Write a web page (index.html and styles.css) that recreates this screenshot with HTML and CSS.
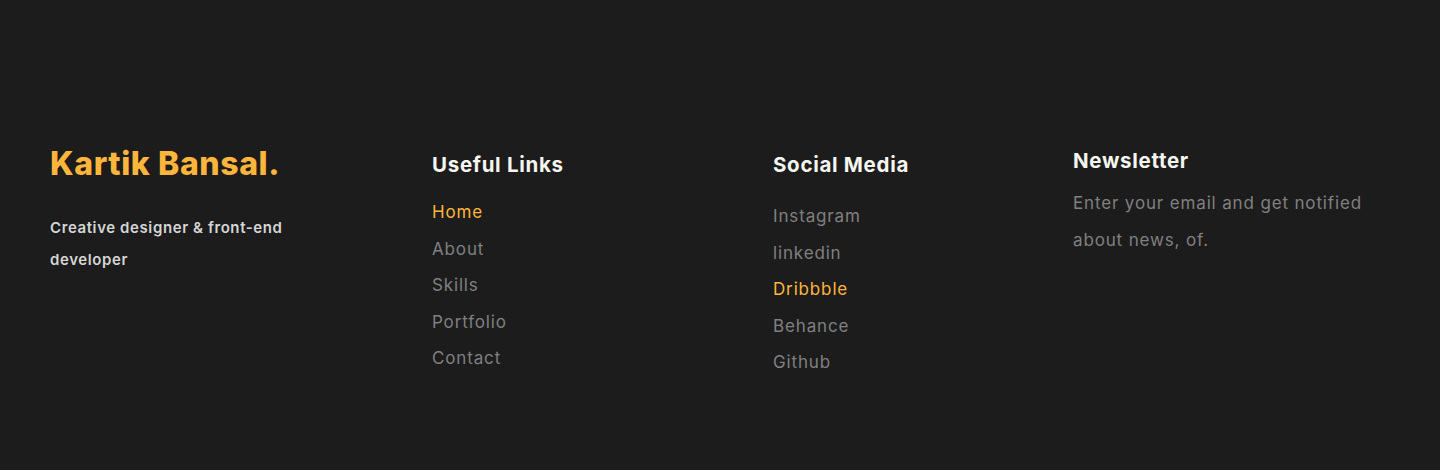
FILE: index.html
```html
<!DOCTYPE html>
<html lang="en">
<head>
<meta charset="utf-8">
<title>Footer</title>
<link rel="stylesheet" href="styles.css">
</head>
<body>
<footer class="footer">
  <div class="col brand">
    <h2 class="logo">Kartik Bansal.</h2>
    <p class="tagline">Creative designer &amp; front-end developer</p>
  </div>
  <div class="col">
    <h3 class="heading">Useful Links</h3>
    <ul class="links">
      <li><a class="active" href="#">Home</a></li>
      <li><a href="#">About</a></li>
      <li><a href="#">Skills</a></li>
      <li><a href="#">Portfolio</a></li>
      <li><a href="#">Contact</a></li>
    </ul>
  </div>
  <div class="col">
    <h3 class="heading">Social Media</h3>
    <ul class="links social">
      <li><a href="#">Instagram</a></li>
      <li><a href="#">linkedin</a></li>
      <li><a class="active" href="#">Dribbble</a></li>
      <li><a href="#">Behance</a></li>
      <li><a href="#">Github</a></li>
    </ul>
  </div>
  <div class="col news">
    <h3 class="heading">Newsletter</h3>
    <p class="news-text">Enter your email and get notified about news, of.</p>
  </div>
</footer>
</body>
</html>
```
FILE: styles.css
```css
* { box-sizing: border-box; }
html, body {
  margin: 0;
  padding: 0;
  background: #1c1c1c;
  height: 470px;
  overflow: hidden;
}
body {
  font-family: "Inter", "Open Sans", sans-serif;
}
.footer {
  display: grid;
  grid-template-columns: 382px 341px 300px 1fr;
  padding: 142px 50px 0 50px;
}
.col { display: flex; flex-direction: column; }
.logo {
  margin: 1px 0 0;
  font-family: "Inter", sans-serif;
  font-weight: 800;
  font-size: 32px;
  line-height: 42px;
  letter-spacing: 0.6px;
  color: #fdb53b;
}
.tagline {
  margin: 27px 0 0;
  width: 250px;
  font-size: 15px;
  font-weight: 600;
  letter-spacing: 0.6px;
  line-height: 32px;
  color: #d6d6d6;
}
.heading {
  margin: 8px 0 0;
  font-size: 20.5px;
  font-weight: 700;
  letter-spacing: 0.7px;
  line-height: 30px;
  color: #f6f6f1;
}
.links {
  list-style: none;
  margin: 20px 0 0;
  padding: 0;
  display: flex;
  flex-direction: column;
  gap: 12.5px;
}
.links.social { margin-top: 24px; }
.links a {
  display: block;
  text-decoration: none;
  font-size: 17px;
  letter-spacing: 0.85px;
  line-height: 24px;
  color: #808080;
}
.links a.active { color: #fdb53b; }
.news .heading { margin-top: 4px; }
.news-text {
  margin: 9px 0 0;
  width: 305px;
  font-size: 17px;
  letter-spacing: 0.85px;
  line-height: 37px;
  color: #808080;
}
```
